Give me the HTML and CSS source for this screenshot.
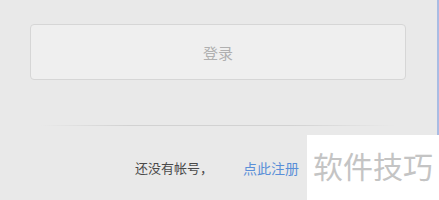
FILE: index.html
```html
<!DOCTYPE html>
<html lang="zh-CN">
<head>
<meta charset="utf-8">
<link rel="stylesheet" href="styles.css">
</head>
<body>
<div class="panel">
  <div class="btn">登录</div>
  <div class="sep"></div>
  <div class="signup"><span class="q">还没有帐号，</span><a class="reg" href="#">点此注册</a></div>
</div>
<div class="watermark">软件技巧</div>
</body>
</html>
```
FILE: styles.css
```css
html, body {
  margin: 0;
  padding: 0;
}
body {
  width: 439px;
  height: 200px;
  background: #e9e9e9;
  font-family: "Noto Sans CJK SC", "Noto Sans", sans-serif;
  position: relative;
  overflow: hidden;
}
.panel {
  box-sizing: border-box;
  width: 439px;
  height: 200px;
  padding: 24px 0 0 30px;
  border-right: 2px solid #a9bce3;
  display: flex;
  flex-direction: column;
}
.btn {
  box-sizing: border-box;
  width: 376px;
  height: 56px;
  border: 1px solid #d6d6d6;
  border-radius: 4px;
  background: #efefef;
  color: #b0b0b0;
  font-size: 15px;
  display: flex;
  align-items: center;
  justify-content: center;
}
.sep {
  margin-top: 45px;
  margin-left: 10px;
  width: 355px;
  height: 1px;
  background: linear-gradient(to right, rgba(205,205,205,0), #d2d2d2 25%, #d2d2d2 70%, rgba(205,205,205,0));
}
.signup {
  margin-top: 32px;
  padding-left: 105px;
  font-size: 13px;
  line-height: 20px;
  display: flex;
  align-items: center;
}
.q {
  color: #4a4a4a;
  width: 108px;
}
.reg {
  color: #5a8fd8;
  font-size: 14px;
  text-decoration: none;
}
.watermark {
  position: absolute;
  left: 307px;
  top: 135px;
  right: 0;
  bottom: 0;
  background: #fff;
  color: #c4c4c4;
  font-size: 30px;
  line-height: 34px;
  padding: 13px 0 0 6px;
  white-space: nowrap;
}
```
